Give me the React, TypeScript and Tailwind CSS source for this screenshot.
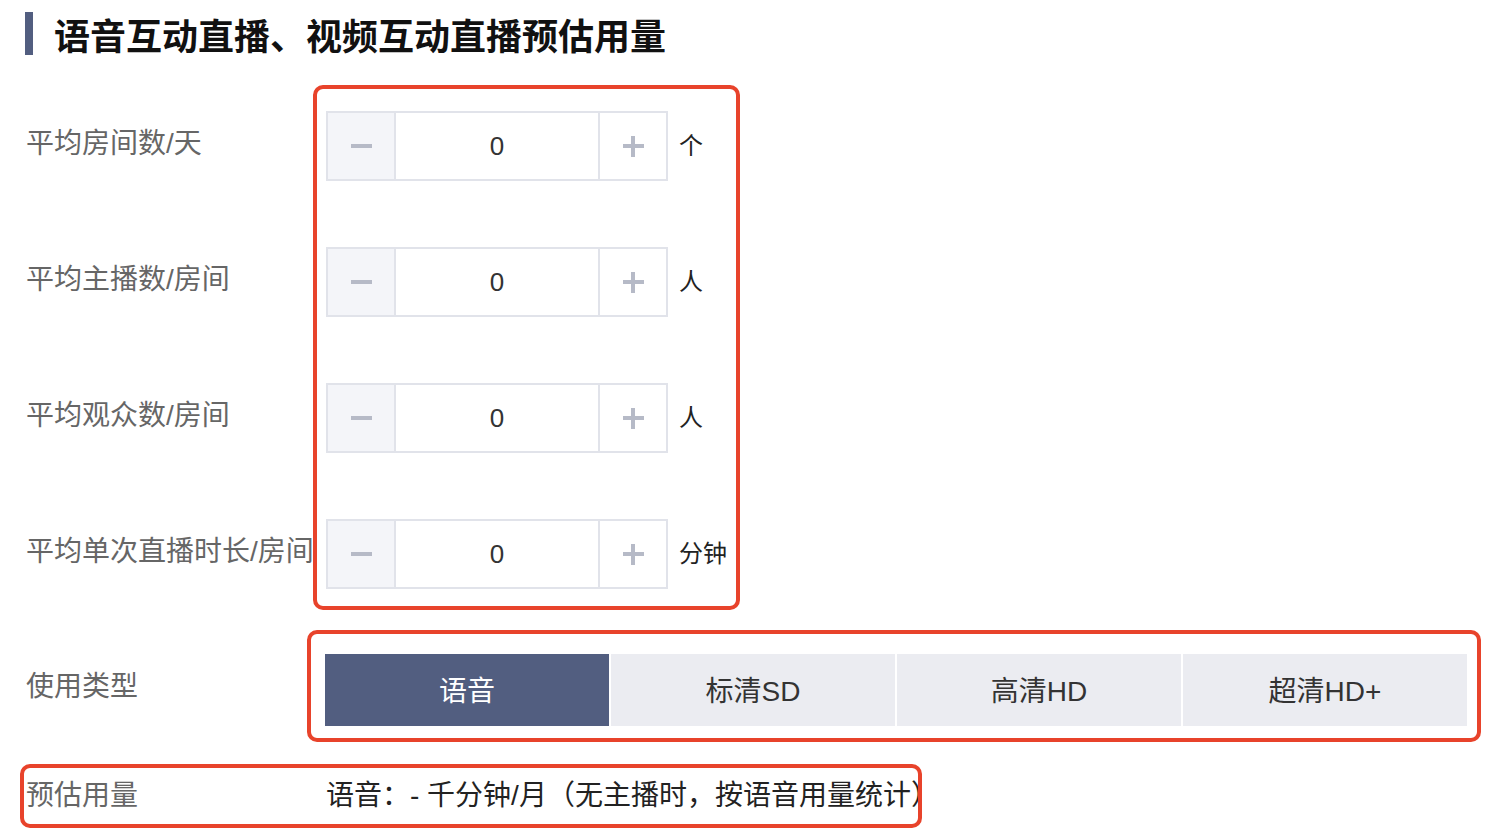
const rows = [
  { label: "平均房间数/天", unit: "个" },
  { label: "平均主播数/房间", unit: "人" },
  { label: "平均观众数/房间", unit: "人" },
  { label: "平均单次直播时长/房间", unit: "分钟" },
];

const types = ["语音", "标清SD", "高清HD", "超清HD+"];

function Stepper({ unit }: { unit: string }) {
  return (
    <div className="flex items-center">
      {/* Minus */}
      <div className="flex h-[70px] w-[70px] items-center justify-center border-2 border-[#e1e3ea] bg-[#f4f5f9]">
        <span className="block h-[4px] w-[21px] bg-[#b6bac7]" />
      </div>
      {/* Value */}
      <div className="flex h-[70px] w-[202px] items-center justify-center border-y-2 border-[#e1e3ea] bg-white text-[26px] text-[#333]">
        0
      </div>
      {/* Plus */}
      <div className="relative flex h-[70px] w-[70px] items-center justify-center border-2 border-[#e1e3ea] bg-white">
        <span className="absolute h-[4px] w-[21px] bg-[#b6bac7]" />
        <span className="absolute h-[21px] w-[4px] bg-[#b6bac7]" />
      </div>
      <span className="ml-[11px] text-[24px] text-[#222]">{unit}</span>
    </div>
  );
}

export default function App() {
  return (
    <div
      className="relative h-[836px] w-[1502px] overflow-hidden bg-white"
      style={{ fontFamily: '"Liberation Sans", "Noto Sans CJK SC", sans-serif' }}
    >
      {/* Title */}
      <div className="flex h-[55px] items-start pl-[25px] pt-[12px]">
        <div className="h-[43px] w-[8px] bg-[#525e80]" />
        <h1 className="ml-[21px] pt-[4px] text-[36px] font-bold leading-[43px] text-[#111]">
          语音互动直播、视频互动直播预估用量
        </h1>
      </div>

      {/* Stepper rows */}
      <div className="mt-[56px] flex flex-col gap-[66px]">
        {rows.map((row) => (
          <div key={row.label} className="flex h-[70px] items-center">
            <div className="w-[326px] whitespace-nowrap pb-[5px] pl-[26px] text-[28px] text-[#666]">
              {row.label}
            </div>
            <Stepper unit={row.unit} />
          </div>
        ))}
      </div>

      {/* Type selector */}
      <div className="mt-[65px] flex h-[72px] items-center">
        <div className="w-[325px] pb-[6px] pl-[26px] text-[28px] text-[#666]">使用类型</div>
        <div className="grid w-[1142px] grid-cols-4 gap-[2px]">
          {types.map((t, i) => (
            <div
              key={t}
              className={
                i === 0
                  ? "flex h-[72px] items-center justify-center bg-[#525e80] pt-[4px] text-[28px] text-white"
                  : "flex h-[72px] items-center justify-center bg-[#ebecf1] pt-[4px] text-[28px] text-[#333]"
              }
            >
              {t}
            </div>
          ))}
        </div>
      </div>

      {/* Estimate */}
      <div className="mt-[52px] flex h-[36px] items-center">
        <div className="w-[326px] pl-[26px] text-[28px] text-[#666]">预估用量</div>
        <div className="w-[594px] overflow-hidden whitespace-nowrap text-[28px] text-[#222]">
          语音：- 千分钟/月（无主播时，按语音用量统计）
        </div>
      </div>

      {/* Annotation boxes */}
      <div className="pointer-events-none absolute left-[313px] top-[85px] h-[525px] w-[427px] rounded-[10px] border-[4px] border-[#e8432b]" />
      <div className="pointer-events-none absolute left-[307px] top-[630px] h-[112px] w-[1174px] rounded-[10px] border-[4px] border-[#e8432b]" />
      <div className="pointer-events-none absolute left-[20px] top-[764px] h-[64px] w-[902px] rounded-[10px] border-[4px] border-[#e8432b]" />
    </div>
  );
}
